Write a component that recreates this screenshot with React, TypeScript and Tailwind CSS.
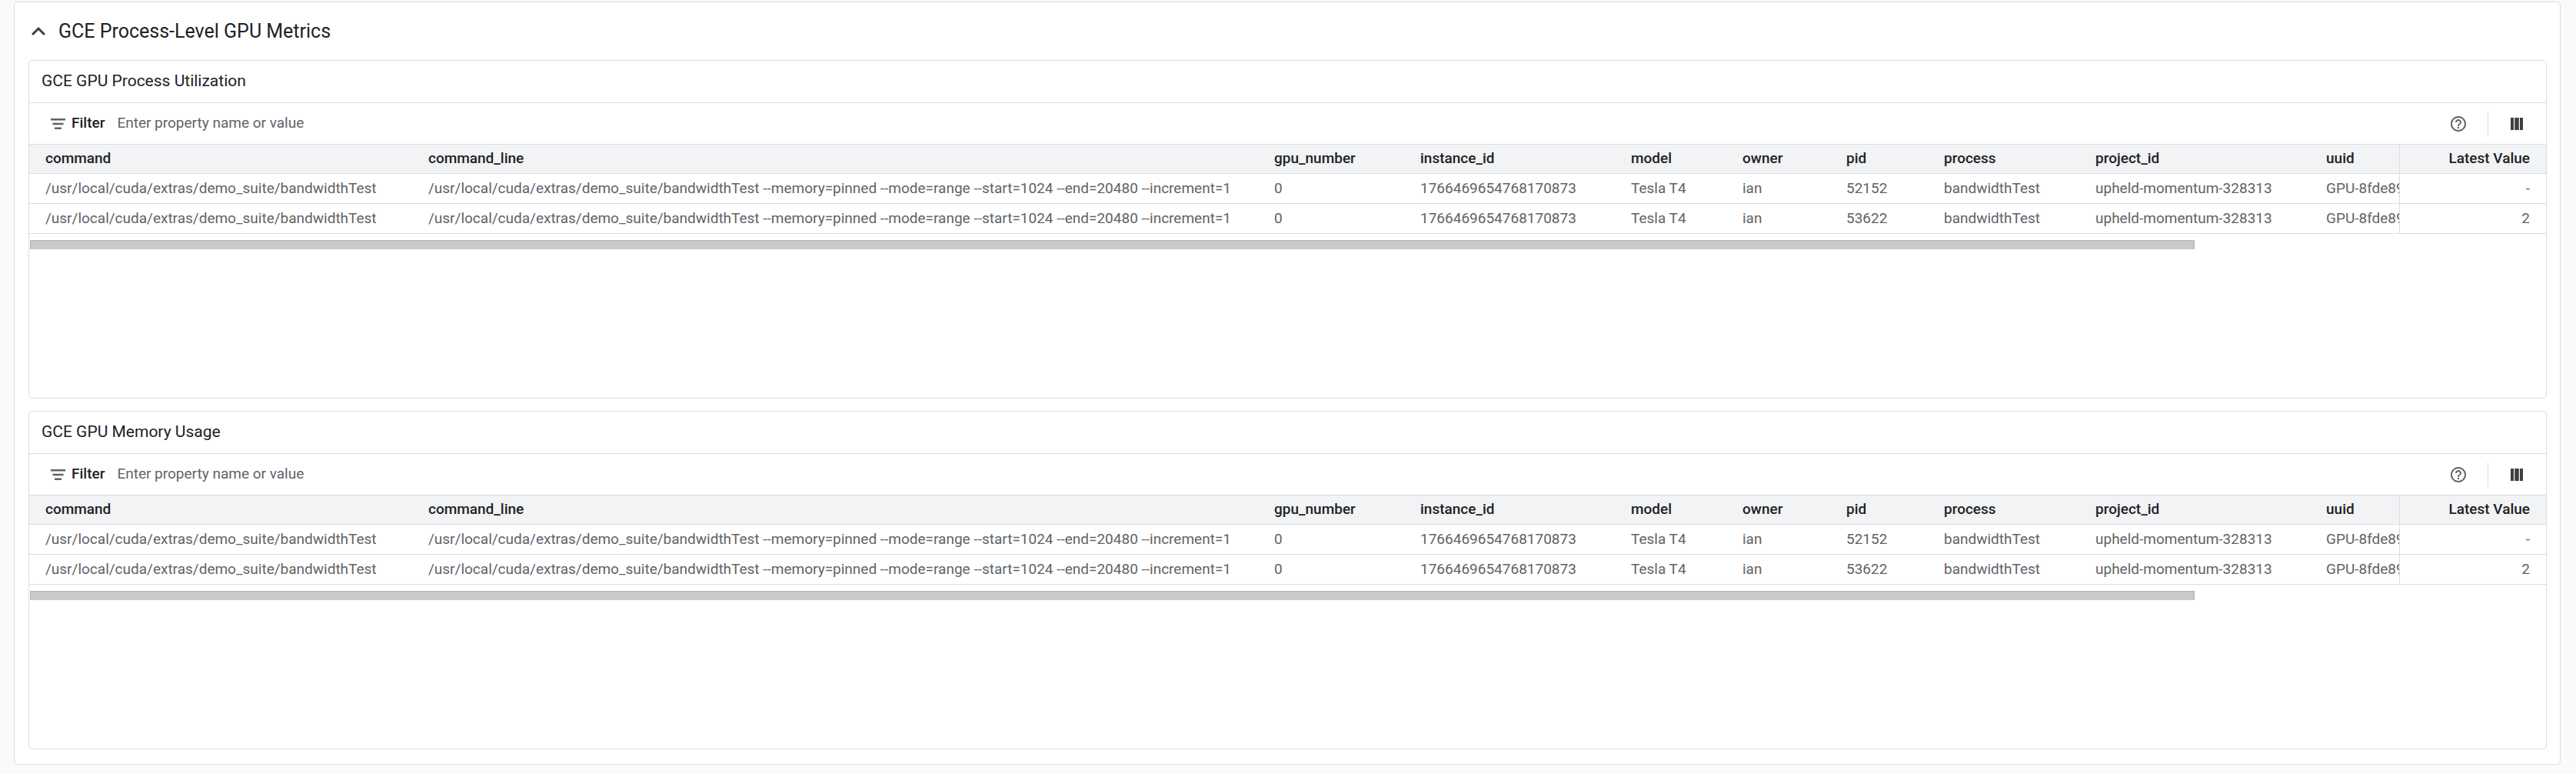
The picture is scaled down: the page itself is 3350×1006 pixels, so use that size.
const columns = [
  { key: "command", width: "w-[498px]" },
  { key: "command_line", width: "w-[1100px]" },
  { key: "gpu_number", width: "w-[190px]" },
  { key: "instance_id", width: "w-[274px]" },
  { key: "model", width: "w-[145px]" },
  { key: "owner", width: "w-[135px]" },
  { key: "pid", width: "w-[127px]" },
  { key: "process", width: "w-[197px]" },
  { key: "project_id", width: "w-[300px]" },
  { key: "uuid", width: "w-[647px]" },
];

const binary = "/usr/local/cuda/extras/demo_suite/bandwidthTest";

function makeRow(pid: string, value: string) {
  return {
    cells: [
      binary,
      binary + " --memory=pinned --mode=range --start=1024 --end=20480 --increment=1",
      "0",
      "1766469654768170873",
      "Tesla T4",
      "ian",
      pid,
      "bandwidthTest",
      "upheld-momentum-328313",
      "GPU-8fde89",
    ],
    value,
  };
}

const rows = [makeRow("52152", "-"), makeRow("53622", "2")];

function MetricCard({ id, title }: { id: string; title: string }) {
  return (
    <section className="flex h-[440px] flex-col overflow-hidden rounded-[5px] border border-[#dadce0] bg-white">
      <h2 className="flex h-[55px] shrink-0 items-center border-b border-[#dadce0] px-4 text-[21px] text-[#202124]">
        {title}
      </h2>
      <div className="flex h-[54px] shrink-0 items-center border-b border-[#dadce0] pr-[22px] pl-7">
        <svg className="h-[14px] w-[19px]" viewBox="0 0 19 14" fill="#5f6368" aria-hidden="true">
          <path d="M0 0h19v2.4H0zM2.4 5.8h14.2v2.4H2.4zM5 11.6h9V14H5z" />
        </svg>
        <label htmlFor={id} className="ml-2 text-[19px] font-medium text-[#202124]">
          Filter
        </label>
        <input
          id={id}
          type="text"
          placeholder="Enter property name or value"
          className="ml-4 min-w-0 flex-1 text-[19px] text-[#202124] outline-none placeholder:text-[#5f6368] placeholder:opacity-100"
        />
        <button type="button" aria-label="Help" className="flex size-6 items-center justify-center">
          <svg className="size-6" viewBox="0 0 24 24" fill="#5f6368" aria-hidden="true">
            <path d="M11 18h2v-2h-2v2zm1-16C6.48 2 2 6.48 2 12s4.48 10 10 10 10-4.480 10-10S17.520 2 12 2zm0 18c-4.410 0-8-3.590-8-8s3.590-8 8-8 8 3.590 8 8-3.590 8-8 8zm0-14c-2.210 0-4 1.790-4 4h2c0-1.100.9-2 2-2s2 .9 2 2c0 2-3 1.750-3 5h2c0-2.250 3-2.500 3-5 0-2.210-1.790-4-4-4z" />
          </svg>
        </button>
        <div className="ml-[26px] h-8 w-px bg-[#dadce0]" />
        <button type="button" aria-label="Column display options" className="ml-[21px] flex size-8 items-center justify-center">
          <svg className="size-4" viewBox="0 0 16 16" fill="#3c4043" aria-hidden="true">
            <path d="M0 0h4v16H0zM5.200 0h5.600v16H5.200zM12 0h4v16h-4z" />
          </svg>
        </button>
      </div>
      <div className="shrink-0 overflow-hidden">
        <table className="w-[3804px] table-fixed border-separate border-spacing-0 text-left text-[19px] text-[#5f6368]">
          <colgroup>
            {columns.map((c) => (
              <col key={c.key} className={c.width} />
            ))}
            <col className="w-[191px]" />
          </colgroup>
          <thead>
            <tr className="h-[38px] text-[#202124]">
              {columns.map((c) => (
                <th key={c.key} className="border-b border-[#dadce0] bg-[#f1f3f4] px-[21px] py-0 font-medium whitespace-nowrap">
                  {c.key}
                </th>
              ))}
              <th className="sticky right-0 border-b border-l border-[#dadce0] bg-[#f1f3f4] px-[21px] py-0 text-right font-medium whitespace-nowrap">
                Latest Value
              </th>
            </tr>
          </thead>
          <tbody>
            {rows.map((r) => (
              <tr key={r.cells[6]} className="h-[39px]">
                {r.cells.map((cell, i) => (
                  <td key={columns[i].key} className="border-b border-[#dadce0] px-[21px] py-0 whitespace-nowrap">
                    {cell}
                  </td>
                ))}
                <td className="sticky right-0 border-b border-l border-[#dadce0] bg-white px-[21px] py-0 text-right">
                  {r.value}
                </td>
              </tr>
            ))}
          </tbody>
        </table>
      </div>
      <div className="mt-2 ml-px h-3 w-[86%] shrink-0 border-x border-t border-[#b3b3b3] bg-[#c9c9c9]" />
    </section>
  );
}

export default function App() {
  return (
    <div className="min-h-screen bg-[#f8fafc] pt-0.5 pr-5 pb-3 pl-[18px] font-['Roboto',sans-serif]">
      <main className="rounded-[5px] border border-[#dadce0] bg-white pr-[17px] pb-[19px] pl-[18px]">
        <h1 className="flex h-[75px] items-center text-[25px] text-[#202124]">
          <button type="button" aria-expanded="true" className="-ml-[5px] flex items-center gap-2">
            <svg className="size-9" viewBox="0 0 24 24" fill="#3c4043" aria-hidden="true">
              <path d="M12 8l-6 6 1.410 1.410L12 10.830l4.590 4.580L18 14z" />
            </svg>
            GCE Process-Level GPU Metrics
          </button>
        </h1>
        <div className="flex flex-col gap-4">
          <MetricCard id="filter-utilization" title="GCE GPU Process Utilization" />
          <MetricCard id="filter-memory" title="GCE GPU Memory Usage" />
        </div>
      </main>
    </div>
  );
}
